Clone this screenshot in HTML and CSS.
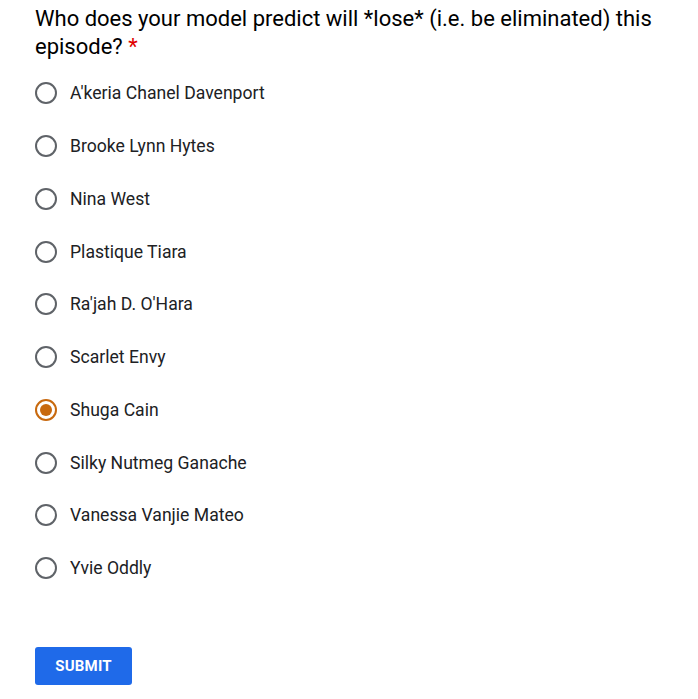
FILE: index.html
```html
<!DOCTYPE html>
<html>
<head>
<meta charset="utf-8">
<link rel="stylesheet" href="styles.css">
</head>
<body>
<form class="form">
  <div class="title">Who does your model predict will *lose* (i.e. be eliminated) this episode? <span class="req">*</span></div>
  <div class="options">
    <label class="opt"><span class="radio"></span><span class="label">A'keria Chanel Davenport</span></label>
    <label class="opt"><span class="radio"></span><span class="label">Brooke Lynn Hytes</span></label>
    <label class="opt"><span class="radio"></span><span class="label">Nina West</span></label>
    <label class="opt"><span class="radio"></span><span class="label">Plastique Tiara</span></label>
    <label class="opt"><span class="radio"></span><span class="label">Ra'jah D. O'Hara</span></label>
    <label class="opt"><span class="radio"></span><span class="label">Scarlet Envy</span></label>
    <label class="opt"><span class="radio checked"></span><span class="label">Shuga Cain</span></label>
    <label class="opt"><span class="radio"></span><span class="label">Silky Nutmeg Ganache</span></label>
    <label class="opt"><span class="radio"></span><span class="label">Vanessa Vanjie Mateo</span></label>
    <label class="opt"><span class="radio"></span><span class="label">Yvie Oddly</span></label>
  </div>
  <button type="button" class="submit">SUBMIT</button>
</form>
</body>
</html>
```
FILE: styles.css
```css
html, body {
  margin: 0;
  padding: 0;
  background: #fff;
}
body {
  font-family: Roboto, "Liberation Sans", sans-serif;
  color: #202124;
}
.form {
  padding: 5px 20px 0 35px;
}
.title {
  font-size: 22px;
  line-height: 28px;
  color: #000;
}
.req {
  color: #e00000;
}
.options {
  display: flex;
  flex-direction: column;
  margin-top: 6px;
}
.opt {
  display: flex;
  align-items: center;
  height: 52.75px;
}
.radio {
  box-sizing: border-box;
  width: 22px;
  height: 22px;
  border: 2px solid #5f6368;
  border-radius: 50%;
  margin-right: 13px;
  flex: none;
  display: flex;
  align-items: center;
  justify-content: center;
}
.radio.checked {
  border-color: #c8690e;
}
.radio.checked::after {
  content: "";
  width: 12px;
  height: 12px;
  border-radius: 50%;
  background: #c8690e;
}
.label {
  font-size: 17.6px;
  color: #202124;
}
.submit {
  margin-top: 52px;
  width: 97px;
  height: 38px;
  border: none;
  border-radius: 3px;
  background: #1f6ae9;
  color: #fff;
  font-family: Roboto, sans-serif;
  font-weight: 700;
  font-size: 15px;
  letter-spacing: 0.2px;
  padding: 0;
}
```
